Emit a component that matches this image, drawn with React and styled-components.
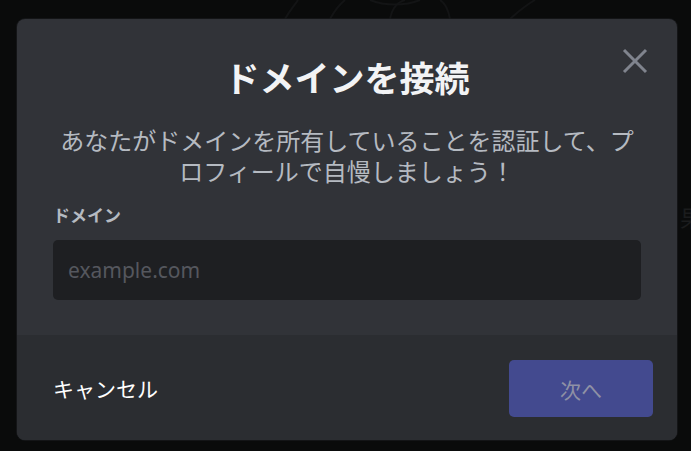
import styled, { createGlobalStyle } from "styled-components";

const GlobalStyle = createGlobalStyle`
  html, body {
    margin: 0;
    padding: 0;
    background: #0a0b0b;
    font-family: "Noto Sans CJK JP", "Noto Sans", sans-serif;
  }
`

const Backdrop = styled.div`
  position: relative;
  width: 691px;
  height: 451px;
  overflow: hidden;
  padding-top: 19px;
  box-sizing: border-box;
`
const Ghost = styled.span`              // texto del fondo, casi invisible
  position: absolute;
  left: 680px;
  top: 200px;
  font-size: 23px;
  color: #1b1c1d;
`
const Art = styled.svg`
  position: absolute;
  left: 0;
  top: 0;
`
const Modal = styled.div`
  position: relative;
  margin-left: 17px;
  width: 660px;
  height: 421px;
  border-radius: 8px;
  background: #313338;
  box-shadow: 0 0 0 1px rgba(24,25,28,.7);
  display: flex;
  flex-direction: column;
  overflow: hidden;
`
const Header = styled.div`
  padding: 37px 36px 0;
  display: flex;
  flex-direction: column;
  align-items: center;
  text-align: center;
`
const Title = styled.h1`
  margin: 0;
  font-size: 35px;
  line-height: 42px;
  font-weight: 700;
  color: #f2f3f5;
`
const Subtitle = styled.p`
  margin: 26px 0 0;
  font-size: 24px;
  line-height: 31px;
  color: #b5bac1;
`
const Close = styled.button`
  position: absolute;
  top: 28px;
  right: 28px;
  width: 28px;
  height: 28px;
  padding: 0;
  border: none;
  background: none;
  display: flex;
  align-items: center;
  justify-content: center;
  cursor: pointer;
`
const Body = styled.div`
  padding: 18px 36px 0;
  flex: 1;
`
const Label = styled.label`
  display: block;
  font-size: 17px;
  line-height: 22px;
  font-weight: 700;
  color: #b5bac1;
`
const Input = styled.input`
  display: block;
  box-sizing: border-box;
  width: 100%;
  height: 60px;
  margin-top: 14px;
  padding: 0 15px;
  border: none;
  border-radius: 5px;
  background: #1e1f22;
  color: #dbdee1;
  font-family: "Noto Sans", sans-serif;
  font-size: 21px;
  outline: none;
  &::placeholder { color: #55575e; }
`
const Footer = styled.div`
  height: 105px;
  background: #2b2d31;
  padding: 0 24px 0 36px;
  display: flex;
  align-items: center;
  justify-content: space-between;
  box-sizing: border-box;
`
const LinkButton = styled.button`
  border: none;
  background: none;
  padding: 0;
  font-family: inherit;
  font-size: 21px;
  color: #ffffff;
  cursor: pointer;
`
const Primary = styled.button`
  width: 144px;
  height: 57px;
  margin-top: 2px;
  border: none;
  border-radius: 5px;
  background: #434a8f;
  color: #8f91a5;
  font-family: inherit;
  font-size: 21px;
  cursor: not-allowed;
`

export default function App() {
    return(
        <>
        <GlobalStyle/>
        <Backdrop>
            <Art width="691" height="19" viewBox="0 0 691 19">
                <g fill="none" stroke="#131415" strokeWidth="2">
                    <path d="M330 19 C335 10 340 4 345 0"/>
                    <path d="M390 19 C392 8 398 2 405 0"/>
                    <path d="M450 19 C448 8 445 3 440 0"/>
                    <path d="M370 0 C385 6 405 6 420 0"/>
                    <path d="M510 19 C520 10 528 4 535 0"/>
                    <path d="M285 19 C290 10 295 5 298 0"/>
                </g>
            </Art>
            <Ghost>果</Ghost>
            <Modal>
                <Header>
                    <Title>ドメインを接続</Title>
                    <Subtitle>あなたがドメインを所有していることを認証して、プロフィールで自慢しましょう！</Subtitle>
                </Header>
                <Close aria-label="close">
                    <svg width="26" height="26" viewBox="0 0 26 26">
                        <path d="M2 2 L24 24 M24 2 L2 24" stroke="#80848e" strokeWidth="3" fill="none"/>
                    </svg>
                </Close>
                <Body>
                    <Label htmlFor="domain">ドメイン</Label>
                    <Input id="domain" placeholder="example.com"/>
                </Body>
                <Footer>
                    <LinkButton>キャンセル</LinkButton>
                    <Primary disabled>次へ</Primary>
                </Footer>
            </Modal>
        </Backdrop>
        </>
    )
}
